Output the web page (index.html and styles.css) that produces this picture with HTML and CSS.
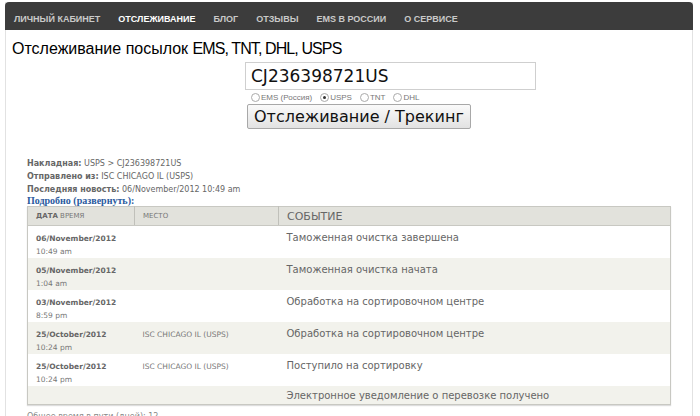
FILE: index.html
```html
<!DOCTYPE html>
<html lang="ru">
<head>
    <meta charset="UTF-8">
    <title>Отслеживание посылок</title>
    <link rel="stylesheet" href="styles.css">
</head>
<body>
<div id="page">
    <ul id="menu">
        <li><a href="#">Личный кабинет</a></li>
        <li class="active"><a href="#">Отслеживание</a></li>
        <li><a href="#">Блог</a></li>
        <li><a href="#">Отзывы</a></li>
        <li><a href="#">EMS в России</a></li>
        <li><a href="#">О сервисе</a></li>
    </ul>

    <h1>Отслеживание посылок <span class="lat">EMS, TNT, DHL, USPS</span></h1>

    <form id="trackForm">
        <input id="trackNum" type="text" value="CJ236398721US">
        <div class="carriers">
            <label><span class="radio"></span>EMS (Россия)</label>
            <label><span class="radio on"></span>USPS</label>
            <label><span class="radio"></span>TNT</label>
            <label><span class="radio"></span>DHL</label>
        </div>
        <input id="trackBtn" type="submit" value="Отслеживание / Трекинг">
    </form>

    <div id="result">
        <p><b>Накладная:</b> USPS &gt; CJ236398721US</p>
        <p><b>Отправлено из:</b> ISC CHICAGO IL (USPS)</p>
        <p><b>Последняя новость:</b> 06/November/2012 10:49 am</p>
        <a class="more" href="#">Подробно (развернуть):</a>

        <table>
            <thead>
                <tr>
                    <th class="date"><b>Дата</b> время</th>
                    <th class="place">Место</th>
                    <th class="event">Событие</th>
                </tr>
            </thead>
            <tbody>
                <tr>
                    <td class="date">06/November/2012<span>10:49 am</span></td>
                    <td class="place"></td>
                    <td class="event">Таможенная очистка завершена</td>
                </tr>
                <tr class="odd">
                    <td class="date">05/November/2012<span>1:04 am</span></td>
                    <td class="place"></td>
                    <td class="event">Таможенная очистка начата</td>
                </tr>
                <tr>
                    <td class="date">03/November/2012<span>8:59 pm</span></td>
                    <td class="place"></td>
                    <td class="event">Обработка на сортировочном центре</td>
                </tr>
                <tr class="odd">
                    <td class="date">25/October/2012<span>10:24 pm</span></td>
                    <td class="place">ISC CHICAGO IL (USPS)</td>
                    <td class="event">Обработка на сортировочном центре</td>
                </tr>
                <tr>
                    <td class="date">25/October/2012<span>10:24 pm</span></td>
                    <td class="place">ISC CHICAGO IL (USPS)</td>
                    <td class="event">Поступило на сортировку</td>
                </tr>
                <tr class="odd last">
                    <td class="date"></td>
                    <td class="place"></td>
                    <td class="event">Электронное уведомление о перевозке получено</td>
                </tr>
            </tbody>
        </table>
        <p class="total">Общее время в пути (дней): 12</p>
    </div>
</div>
</body>
</html>
```

FILE: styles.css
```css
body{
    margin: 0;
    background: #fff;
    font-family: "DejaVu Sans", sans-serif;
}
#page{
    margin: 3px 0 0 5px;
    width: 686px;
    border-left: 1px solid #e2e2e2;
    border-right: 1px solid #e2e2e2;
    min-height: 500px;
}
#menu{
    margin: -1px 0 0 -1px;
    padding: 0 0 0 9px;
    list-style: none;
    display: flex;
    gap: 18px;
    height: 28px;
    align-items: center;
    background: #3c3c3c;
    border-radius: 4px 4px 0 0;
    width: 679px;
}
#menu a{
    font-family: "Liberation Sans", sans-serif;
    font-size: 9px;
    font-weight: bold;
    text-transform: uppercase;
    color: #c9c9c9;
    text-decoration: none;
}
#menu .active a{
    color: #fff;
}
h1{
    margin: 9px 0 0 6px;
    font-family: "Liberation Sans", sans-serif;
    font-weight: normal;
    font-size: 16px;
    color: #000;
    line-height: 20px;
}
h1 .lat{
    letter-spacing: -0.9px;
}
#trackForm{
    margin: 3px 0 0 239px;
    display: flex;
    flex-direction: column;
    align-items: flex-start;
}
#trackNum{
    all: unset;
    box-sizing: border-box;
    width: 291px;
    height: 28px;
    border: 1px solid #cfcfcf;
    padding: 0 5px;
    font-family: "DejaVu Sans", sans-serif;
    font-size: 17px;
    color: #111;
}
.carriers{
    display: flex;
    gap: 8px;
    margin: 2px 0 0 6px;
    height: 11px;
    align-items: center;
}
.carriers label{
    display: flex;
    align-items: center;
    gap: 1px;
    font-family: "Liberation Sans", sans-serif;
    font-size: 8px;
    color: #777;
}
.radio{
    width: 7px;
    height: 7px;
    border: 1px solid #aaa;
    border-radius: 50%;
    position: relative;
}
.radio.on::after{
    content: "";
    position: absolute;
    left: 2px;
    top: 2px;
    width: 3px;
    height: 3px;
    border-radius: 50%;
    background: #333;
}
#trackBtn{
    all: unset;
    box-sizing: border-box;
    margin: 1px 0 0 2px;
    height: 25px;
    padding: 0 6px;
    border: 1px solid #a8a8a8;
    border-radius: 2px;
    background: linear-gradient(#fafafa, #e2e2e2);
    font-family: "DejaVu Sans", sans-serif;
    font-size: 16px;
    color: #111;
}
#result{
    margin: 28px 0 0 21px;
    color: #666;
    font-size: 8px;
}
#result p{
    margin: 0;
    line-height: 13px;
}
#result b{
    color: #666;
}
.more{
    display: block;
    font-family: "Liberation Serif", serif;
    font-weight: bold;
    font-size: 10px;
    line-height: 10px;
    color: #2a5a9e;
    text-decoration: none;
}
table{
    width: 644px;
    border-collapse: collapse;
    border: 1px solid #c8c8c2;
    box-shadow: 0 1px 1px #ddd;
}
th{
    height: 18px;
    padding: 0 8px;
    text-align: left;
    background: #e2e2dc;
    border-bottom: 1px solid #c8c8c2;
    border-left: 1px solid #c0c0ba;
    font-weight: normal;
    text-transform: uppercase;
    font-size: 7px;
    color: #777;
}
th b{
    color: #666;
}
th.event{
    font-size: 11px;
    color: #666;
}
th.date{
    width: 90px;
    border-left: 0;
}
th.place{
    width: 127px;
}
td{
    vertical-align: top;
    padding: 6px 8px 0;
    height: 26px;
}
td.date{
    font-weight: bold;
    font-size: 7.5px;
    line-height: 13px;
    color: #666;
}
td.date span{
    display: block;
    font-weight: normal;
    color: #777;
}
td.place{
    font-size: 7.5px;
    line-height: 13px;
    color: #777;
}
td.event{
    font-size: 10px;
    line-height: 13px;
    color: #666;
    padding-top: 5px;
}
tr.odd td{
    background: #f2f2ec;
}
tr.last td{
    height: 15px;
    padding-top: 3px;
}
.total{
    margin-top: 5px !important;
    font-size: 8px;
    color: #888;
}
```
